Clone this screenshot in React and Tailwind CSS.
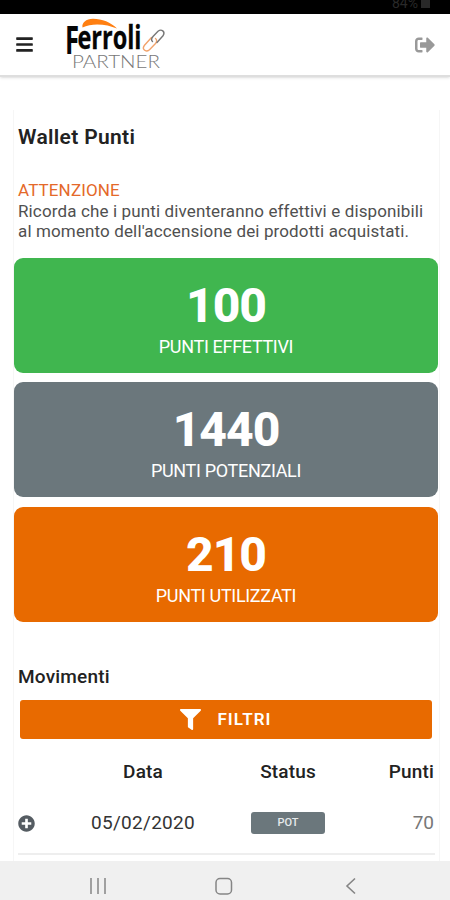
import { FaBars, FaFilter, FaPlusCircle, FaSignOutAlt } from 'react-icons/fa';

const totals = [
    { label: 'PUNTI EFFETTIVI', value: 100, bg: 'bg-[#40b64f]' },
    { label: 'PUNTI POTENZIALI', value: 1440, bg: 'bg-[#6b777c]' },
    { label: 'PUNTI UTILIZZATI', value: 210, bg: 'bg-[#e86a00]' },
];

const movements = [{ date: '05/02/2020', status: 'POT', points: 70 }];

function Logo() {
    return (
        <svg className="h-[60px] w-[104px]" viewBox="62 14 104 60">
            <path d="M82.500 26.500C81.500 22 86 17.800 93 17.800C102 17.800 111 21.500 117 27.500C107 23 92 21.500 82.500 26.500Z" fill="#ff7f11" />
            <g fontFamily="'Open Sans', sans-serif" fontWeight="700" fill="#050505">
                <text x="65" y="52.700" fontSize="39" textLength="14" lengthAdjust="spacingAndGlyphs">F</text>
                <text x="77.500" y="47.700" fontSize="32" textLength="64" lengthAdjust="spacingAndGlyphs" stroke="#050505" strokeWidth="0.300">erroli</text>
            </g>
            <text x="72" y="66.500" fontSize="18.500" fontFamily="Lato, sans-serif" fontWeight="300" fill="#777" textLength="88" lengthAdjust="spacingAndGlyphs">
                PARTNER
            </text>
            {/* Chain link */}
            <g fill="none" strokeWidth="1.400" strokeLinecap="round">
                <path d="M151.500 36.500L144.500 44.200C141.500 48 145.500 52 149.500 48.700L155.500 42.500C157 40.500 157 38.500 155.500 37.500" stroke="#f1a36b" />
                <path d="M152.500 40.500C151 39 151.500 37.200 153 35.500L158 30.300C161.500 27.500 165.500 30.500 163.200 34.500L157 41.500" stroke="#777" />
            </g>
        </svg>
    );
}

function TotalCard({ total }) {
    return (
        <div className={`flex h-[115px] flex-col items-center rounded-[9px] pt-[22px] text-white ${total.bg}`}>
            <span className="text-[48px] leading-[52px] font-extrabold tracking-[-1px]">{total.value}</span>
            <span className="mt-[4px] text-[18px] leading-[22px] tracking-[-0.320px]">{total.label}</span>
        </div>
    );
}

function MovementRow({ movement }) {
    return (
        <div className="grid h-[61px] grid-cols-[56px_138px_152px_70px] items-center border-b-2 border-[#eeeeee] text-[19px]">
            <FaPlusCircle className="h-[17px] w-[17px] text-[#555c62]" />
            <span className="text-center tracking-[0.300px] text-[#333]">{movement.date}</span>
            <span className="mx-auto flex h-[22px] w-[74px] items-center justify-center rounded-[3px] bg-[#6b777c] text-[11px] font-medium text-[#e6eaeb]">
                {movement.status}
            </span>
            <span className="text-right text-[#777]">{movement.points}</span>
        </div>
    );
}

function NavigationBar() {
    return (
        <nav className="flex h-[39px] shrink-0 bg-[#f0f0f0] pl-[89px] text-[#858585]">
            <svg className="mt-[16px] h-[18px] w-[18px]" viewBox="0 0 18 18" fill="none" stroke="currentColor" strokeWidth="1.500">
                <path d="M2 1V17M9 1V17M16 1V17" />
            </svg>
            <svg className="mt-[16px] ml-[108px] h-[18px] w-[18px]" viewBox="0 0 18 18" fill="none" stroke="currentColor" strokeWidth="1.500">
                <rect x="1" y="1.500" width="15.500" height="15.500" rx="4" />
            </svg>
            <svg className="mt-[16px] ml-[111px] h-[18px] w-[12px]" viewBox="0 0 12 18" fill="none" stroke="currentColor" strokeWidth="1.600">
                <path d="M11 1.500L3 9L11 16.500" />
            </svg>
        </nav>
    );
}

export default function App() {
    return (
        <div className="flex h-[900px] w-[450px] flex-col overflow-hidden bg-white font-['Roboto',sans-serif] text-[#222]">
            {/* Status bar */}
            <div className="flex h-[14px] shrink-0 items-end justify-end gap-[3px] overflow-hidden bg-black pr-[20px] pb-[5px] text-[14px] leading-[12px] text-[#292929]">
                <span>84%</span>
                <span className="mb-[1px] h-[9px] w-[9px] bg-[#292929]"></span>
            </div>

            <header className="flex h-[63px] shrink-0 items-center justify-between border-b-2 border-[#dedede] pr-[15px] pl-[15px] shadow-sm">
                <div className="flex items-center">
                    <FaBars className="h-[19px] w-[19px] text-[#222]" />
                    <div className="ml-[28px]">
                        <Logo />
                    </div>
                </div>
                <FaSignOutAlt className="h-[20px] w-[20px] text-[#999]" />
            </header>

            <main className="mt-[33px] mr-[10px] ml-[13px] flex-1 border-x border-[#f6f6f6]">
                <h1 className="pt-[14px] pl-[4px] text-[21px] leading-[26px] font-semibold tracking-[0.330px]">Wallet Punti</h1>
                <div className="mt-[30px] pl-[4px] text-[17px] leading-[20.500px] tracking-[0.130px]">
                    <p className="text-[#e4692a]">ATTENZIONE</p>
                    <p className="text-[#505050]">
                        Ricorda che i punti diventeranno effettivi e disponibili
                        <br />
                        al momento dell'accensione dei prodotti acquistati.
                    </p>
                </div>

                <section className="mt-[16px] mr-px flex flex-col gap-[9.500px]">
                    {totals.map((total) => (
                        <TotalCard key={total.label} total={total} />
                    ))}
                </section>

                <section className="pr-[4px] pl-[4px]">
                    <h2 className="mt-[43.500px] text-[19px] leading-[24px] font-medium tracking-[0.200px]">Movimenti</h2>
                    <button className="mt-[11px] ml-[2px] flex h-[39px] w-[412px] items-center justify-center rounded-[3px] bg-[#e86a00] text-[17px] font-semibold tracking-[1.100px] text-white">
                        <FaFilter className="mr-[16px] h-[21px] w-[21px]" />
                        FILTRI
                    </button>

                    <div className="mt-[19px] grid h-[28px] grid-cols-[56px_138px_152px_70px] items-center text-[19px] font-medium tracking-[0.150px]">
                        <span></span>
                        <span className="text-center">Data</span>
                        <span className="text-center">Status</span>
                        <span className="text-right">Punti</span>
                    </div>
                    <div className="pt-[7.500px]">
                        {movements.map((movement) => (
                            <MovementRow key={movement.date} movement={movement} />
                        ))}
                    </div>
                </section>
            </main>

            <NavigationBar />
        </div>
    );
}
